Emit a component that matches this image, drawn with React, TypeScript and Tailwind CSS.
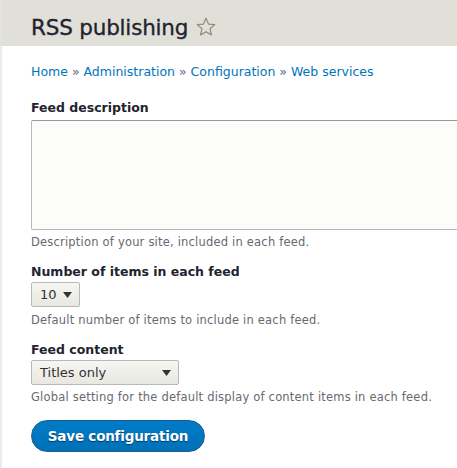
export default function App() {
  const font = { fontFamily: '"DejaVu Sans", "Lucida Grande", Verdana, sans-serif' };
  return (
    <div className="w-[457px] h-[468px] overflow-hidden bg-white relative" style={font}>
      {/* left edge shadow */}
      <div className="absolute left-0 top-0 bottom-0 w-[3px] bg-gradient-to-r from-[#e4e4e4] to-transparent z-10" />
      <header className="h-[46px] bg-[#e0e0d8] pl-[31px] flex items-center">
        <h1 className="text-[21.5px] leading-none text-[#222330] tracking-[-0.2px] flex items-center pt-[9px] [-webkit-text-stroke:0.35px_#222330]">
          RSS publishing
          <svg width="22" height="22" viewBox="0 0 24 24" className="ml-[7px] -mt-[2px]">
            <path
              d="M12 2.5l2.8 6.3 6.7.6-5.1 4.5 1.5 6.7L12 17.1l-5.9 3.5 1.5-6.7-5.1-4.5 6.7-.6z"
              fill="none"
              stroke="#8e8c80"
              strokeWidth="1.3"
              strokeLinejoin="round"
            />
          </svg>
        </h1>
      </header>
      <div className="pl-[31px]">
        <nav className="pt-[18px] text-[12.5px] text-[#0074bd] leading-[16px]">
          Home <span className="text-[#5a6a85]">»</span> Administration <span className="text-[#5a6a85]">»</span> Configuration{' '}
          <span className="text-[#5a6a85]">»</span> Web services
        </nav>

        <div className="mt-[20px]">
          <label className="block font-bold text-[12.5px] text-[#222330] leading-[16px]">Feed description</label>
          <div className="mt-[4px] h-[110px] w-[460px] bg-[#fcfcfa] border border-[#b8b8b8] border-t-[#999] rounded-[2px]" />
          <div className="mt-[4px] text-[11.5px] text-[#68696f] leading-[16px] tracking-[0.2px]">
            Description of your site, included in each feed.
          </div>
        </div>

        <div className="mt-[14px]">
          <label className="block font-bold text-[12.5px] text-[#222330] leading-[16px]">Number of items in each feed</label>
          <div className="mt-[2px] w-[49px] h-[25px] rounded-[2px] border border-[#b8b8b8] bg-gradient-to-b from-[#f6f6f3] to-[#e8e7e0] flex items-center justify-between pl-[8px] pr-[7px] text-[13px] text-[#333]">
            <span>10</span>
            <svg width="9" height="6" viewBox="0 0 9 6"><path d="M0 0h9L4.5 6z" fill="#333" /></svg>
          </div>
          <div className="mt-[5px] text-[11.5px] text-[#68696f] leading-[16px] tracking-[0.2px]">
            Default number of items to include in each feed.
          </div>
        </div>

        <div className="mt-[14px]">
          <label className="block font-bold text-[12.5px] text-[#222330] leading-[16px]">Feed content</label>
          <div className="mt-[2px] w-[148px] h-[25px] rounded-[2px] border border-[#b8b8b8] bg-gradient-to-b from-[#f6f6f3] to-[#e8e7e0] flex items-center justify-between pl-[8px] pr-[7px] text-[13px] text-[#333]">
            <span>Titles only</span>
            <svg width="9" height="6" viewBox="0 0 9 6"><path d="M0 0h9L4.5 6z" fill="#333" /></svg>
          </div>
          <div className="mt-[4px] text-[11.5px] text-[#68696f] leading-[16px] tracking-[0.2px]">
            Global setting for the default display of content items in each feed.
          </div>
        </div>

        <button className="mt-[15px] w-[174px] h-[32px] rounded-full bg-gradient-to-b from-[#007bc6] to-[#0071b8] border border-[#1e5c90] text-white font-bold text-[13.5px] tracking-[-0.2px] [text-shadow:0_1px_1px_rgba(0,0,0,0.5)]">
          Save configuration
        </button>
      </div>
    </div>
  );
}
